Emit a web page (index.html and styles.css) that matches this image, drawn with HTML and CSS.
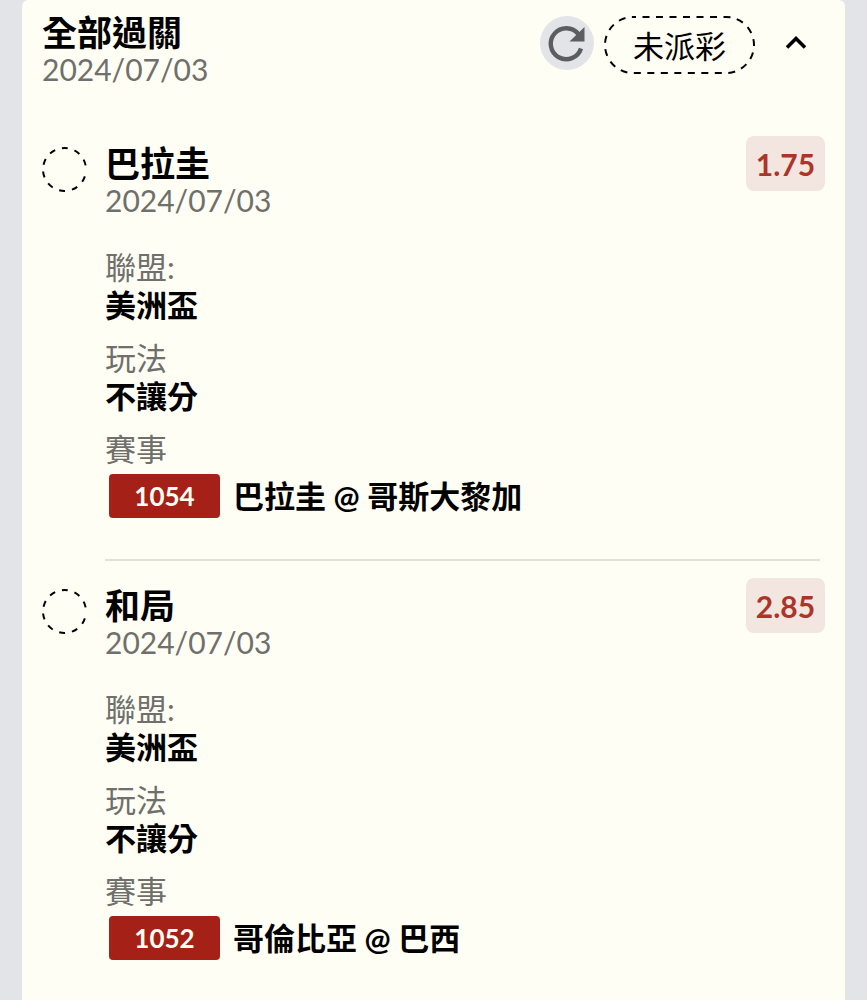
FILE: index.html
```html
<!DOCTYPE html>
<html lang="zh-Hant">
<head>
  <meta charset="UTF-8">
  <meta name="viewport" content="width=device-width, initial-scale=1">
  <title>全部過關</title>
  <link rel="stylesheet" href="styles.css">
</head>
<body>
  <main class="ticket">
    <header class="ticket-header">
      <div class="heading">
        <h1 class="title">全部過關</h1>
        <time class="date" datetime="2024-07-03">2024/07/03</time>
      </div>
      <button class="refresh" type="button" aria-label="重新整理">
        <svg viewBox="0 0 54 54" aria-hidden="true">
          <path d="M38.5 18.2A15.5 15.5 0 1 0 41 32.5" fill="none" stroke="#5c5d60" stroke-width="4.4"/>
          <path d="M44.5 11V25.5H29.5Z" fill="#5c5d60"/>
        </svg>
      </button>
      <span class="status">
        <svg class="status-outline" aria-hidden="true">
          <rect x="1" y="1" rx="28" fill="none" stroke="#000" stroke-width="2" stroke-dasharray="7 6.5" stroke-dashoffset="4"/>
        </svg>
        未派彩
      </span>
      <button class="toggle" type="button" aria-label="收合" aria-expanded="true">
        <svg viewBox="0 0 24 16" aria-hidden="true">
          <path d="M3 12.5L12 3.5L21 12.5" fill="none" stroke="#000" stroke-width="3.6"/>
        </svg>
      </button>
    </header>

    <section class="leg">
      <svg class="leg-state" viewBox="0 0 45 45" aria-hidden="true">
        <circle cx="22.5" cy="22.5" r="21.5" fill="none" stroke="#000" stroke-width="2" stroke-dasharray="6 7" stroke-dashoffset="-7"/>
      </svg>
      <div class="leg-body">
        <h2 class="title">巴拉圭</h2>
        <time class="date" datetime="2024-07-03">2024/07/03</time>
        <dl class="details">
          <dt>聯盟:</dt>
          <dd>美洲盃</dd>
          <dt>玩法</dt>
          <dd>不讓分</dd>
          <dt>賽事</dt>
          <dd class="match"><span class="match-no">1054</span>巴拉圭 @ 哥斯大黎加</dd>
        </dl>
      </div>
      <span class="odds">1.75</span>
    </section>

    <section class="leg">
      <svg class="leg-state" viewBox="0 0 45 45" aria-hidden="true">
        <circle cx="22.5" cy="22.5" r="21.5" fill="none" stroke="#000" stroke-width="2" stroke-dasharray="6 7" stroke-dashoffset="-7"/>
      </svg>
      <div class="leg-body">
        <h2 class="title">和局</h2>
        <time class="date" datetime="2024-07-03">2024/07/03</time>
        <dl class="details">
          <dt>聯盟:</dt>
          <dd>美洲盃</dd>
          <dt>玩法</dt>
          <dd>不讓分</dd>
          <dt>賽事</dt>
          <dd class="match"><span class="match-no">1052</span>哥倫比亞 @ 巴西</dd>
        </dl>
      </div>
      <span class="odds">2.85</span>
    </section>
  </main>
</body>
</html>
```

FILE: styles.css
```css
* {
  box-sizing: border-box;
}
body {
  margin: 0;
  padding: 0 22px;
  background: #e3e4e8;
  color: #000;
  font-family: Lato, "Noto Sans CJK TC", sans-serif;
  font-size: 31px;
  line-height: 38px;
}
.ticket {
  min-height: 100vh;
  padding: 13px 20px 0;
  background: #fefef4;
  border-radius: 6px 6px 0 0;
}
.ticket-header {
  display: flex;
  align-items: flex-start;
  margin-bottom: 49px;
}
.heading {
  flex: 1;
}
.title {
  margin: 0;
  font-size: 35px;
  font-weight: 700;
  line-height: 38px;
}
.date {
  display: block;
  font-size: 30px;
  line-height: 36px;
  color: #6f6f6c;
}
button {
  padding: 0;
  border: 0;
  background: none;
  cursor: pointer;
}
button svg {
  display: block;
  width: 100%;
}
.refresh {
  width: 54px;
  height: 54px;
  margin: 3px 10px 0 0;
  border-radius: 50%;
  background: #e3e4e8;
}
.status {
  position: relative;
  margin-top: 3px;
  padding: 11px 29px 9px;
}
.status-outline {
  position: absolute;
  inset: 0;
  width: 100%;
  height: 100%;
}
.status-outline rect {
  width: calc(100% - 2px);
  height: calc(100% - 2px);
}
.toggle {
  width: 24px;
  margin: 22px 17px 0 29px;
}
.leg {
  display: flex;
  align-items: flex-start;
  position: relative;
}
.leg-state {
  width: 45px;
  height: 45px;
  margin: 11px 18px 0 0;
}
.leg-body {
  flex: 1;
  padding: 8px 0 41px;
}
.leg + .leg {
  padding-top: 19px;
}
/* divider lines up with the text column */
.leg + .leg::before {
  content: "";
  position: absolute;
  top: 0;
  left: 63px;
  right: 5px;
  height: 2px;
  background: #e2e2dc;
}
.details {
  margin: 30px 0 0;
}
.details dt {
  color: #6f6f6c;
}
.details dd {
  margin: 0 0 15px;
  font-weight: 700;
}
.details .match {
  display: flex;
  align-items: center;
  margin: 6px 0 0 4px;
  gap: 13px;
}
.match-no {
  width: 111px;
  border-radius: 4px;
  background: #a52117;
  color: #fefef4;
  font-size: 26px;
  line-height: 44px;
  text-align: center;
}
.odds {
  width: 79px;
  padding-top: 2px;
  border-radius: 8px;
  background: #f3e6e0;
  color: #ab3529;
  font-size: 30px;
  font-weight: 700;
  line-height: 53px;
  text-align: center;
}
```
